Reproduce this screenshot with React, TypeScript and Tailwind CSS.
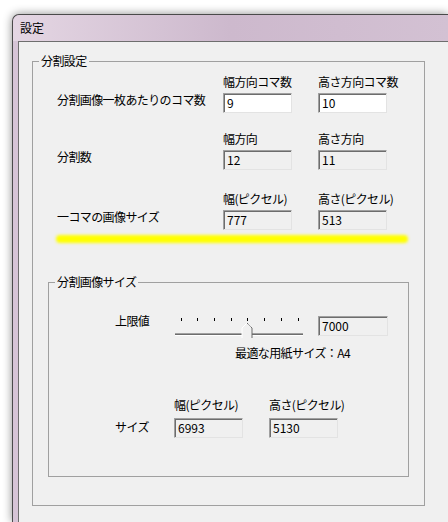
import React from "react";

const font = "font-['Noto_Sans_CJK_JP','Noto_Sans_CJK_SC',sans-serif]";

interface BoxProps {
  value: string;
  editable?: boolean;
  width?: string;
}

const Box: React.FC<BoxProps> = ({ value, editable = false, width = "w-[69px]" }) => (
  <div
    className={`${width} h-[20px] flex items-center pl-[3px] border border-t-[#a0a0a0] border-l-[#a0a0a0] border-r-[#e3e3e3] border-b-[#e3e3e3] shadow-[inset_1px_1px_0_#6d6d6d] text-[12px] leading-[14px] text-black ${
      editable ? "bg-white" : "bg-[#f0f0f0]"
    }`}
  >
    {value}
  </div>
);

// 見出し + 入力欄
const Col: React.FC<{ head: string; value: string; editable?: boolean; gap: string }> = ({
  head,
  value,
  editable,
  gap,
}) => (
  <div className="flex flex-col">
    <div className={`h-[14px] leading-[14px] text-[12px] tracking-[-0.6px] whitespace-nowrap ${gap}`}>{head}</div>
    <Box value={value} editable={editable} />
  </div>
);

const Slider: React.FC = () => {
  const ticks = [6, 22, 39, 56, 72, 89, 106, 123];
  return (
    <svg width="143" height="28" viewBox="0 0 143 28" className="mt-[-4px] shrink-0">
      {ticks.map((x) => (
        <rect key={x} x={x} y={6} width={1} height={3} fill="#000" />
      ))}
      <rect x={0} y={21} width={128} height={1} fill="#a0a0a0" />
      <rect x={0} y={22} width={128} height={1} fill="#6d6d6d" />
      <rect x={0} y={23} width={128} height={1} fill="#ffffff" />
      {/* つまみ */}
      <polygon points="67,16 72,11 77,16 77,26 67,26" fill="#f0f0f0" />
      <polyline points="67,26 67,16 72,11" fill="none" stroke="#ffffff" strokeWidth="1" />
      <polyline points="72,11 77,16 77,26" fill="none" stroke="#6d6d6d" strokeWidth="1" />
      <polyline points="73,12 76,15" fill="none" stroke="#a0a0a0" strokeWidth="1" />
    </svg>
  );
};

export default function App() {
  return (
    <div className={`w-[448px] h-[522px] overflow-hidden bg-white pt-[14px] pl-[12px] ${font} text-black`}>
      <div className="h-full flex flex-col border-l border-t border-[#4a4a4a] rounded-tl-[7px] bg-[#d6c4d6] shadow-[0_0_10px_rgba(0,0,0,0.45)]">
        {/* タイトルバー */}
        <div className="h-[26px] flex items-center pl-[7px] rounded-tl-[7px] bg-linear-to-r from-[#e4d6e3] via-[#cdb9cd] to-[#d3c1d3]">
          <span className="text-[12px] leading-[14px]">設定</span>
        </div>

        <div className="flex-1 flex pl-[5px]">
          <div className="flex-1 border-l border-t border-[#6e6e6e] bg-[#f0f0f0] pl-[13px] pt-[12px]">
            <fieldset className="w-[393px] h-[452px] border border-[#a0a0a0] p-0 m-0">
              <legend className="ml-[6px] px-[2px] text-[12px] leading-[14px] tracking-[-0.6px]">分割設定</legend>

              <div className="pt-[7px] flex flex-col">
                {/* 行1 */}
                <div className="flex items-end pl-[24px]">
                  <div className="w-[166px] mb-[6px] text-[12px] leading-[14px] tracking-[-0.6px] whitespace-nowrap">
                    分割画像一枚あたりのコマ数
                  </div>
                  <Col head="幅方向コマ数" value="9" editable gap="mb-[4px]" />
                  <div className="w-[26px]" />
                  <Col head="高さ方向コマ数" value="10" editable gap="mb-[4px]" />
                </div>

                {/* 行2 */}
                <div className="flex items-end pl-[24px] mt-[19px]">
                  <div className="w-[166px] mb-[6px] text-[12px] leading-[14px] tracking-[-0.6px]">分割数</div>
                  <Col head="幅方向" value="12" gap="mb-[4px]" />
                  <div className="w-[26px]" />
                  <Col head="高さ方向" value="11" gap="mb-[4px]" />
                </div>

                {/* 行3 */}
                <div className="flex items-end pl-[24px] mt-[22px]">
                  <div className="w-[166px] mb-[6px] text-[12px] leading-[14px] tracking-[-0.6px]">一コマの画像サイズ</div>
                  <Col head="幅(ピクセル)" value="777" gap="mb-[4px]" />
                  <div className="w-[26px]" />
                  <Col head="高さ(ピクセル)" value="513" gap="mb-[4px]" />
                </div>

                {/* 蛍光ペンの線 */}
                <div className="ml-[23px] mt-[5px] w-[352px] h-[8px] rounded-full bg-[#ffff00] blur-[1.5px]" />

                <fieldset className="ml-[15px] mt-[32px] w-[361px] h-[202px] border border-[#a0a0a0] p-0 m-0">
                  <legend className="ml-[6px] px-[2px] text-[12px] leading-[14px] tracking-[-0.6px]">分割画像サイズ</legend>

                  <div className="pt-[27px] pl-[66px] flex flex-col">
                    <div className="flex items-start">
                      <div className="w-[60px] mt-[-2px] text-[12px] leading-[14px] tracking-[-0.6px]">上限値</div>
                      <Slider />
                      <Box value="7000" width="w-[70px]" />
                    </div>

                    <div className="ml-[120px] mt-[6px] text-[12px] leading-[14px] tracking-[-0.6px] whitespace-nowrap">
                      最適な用紙サイズ：A4
                    </div>

                    <div className="flex items-end mt-[38px]">
                      <div className="w-[59px] mb-[4px] text-[12px] leading-[14px] tracking-[-0.6px]">サイズ</div>
                      <Col head="幅(ピクセル)" value="6993" gap="mb-[6px]" />
                      <div className="w-[26px]" />
                      <Col head="高さ(ピクセル)" value="5130" gap="mb-[6px]" />
                    </div>
                  </div>
                </fieldset>
              </div>
            </fieldset>
          </div>
        </div>
      </div>
    </div>
  );
}
